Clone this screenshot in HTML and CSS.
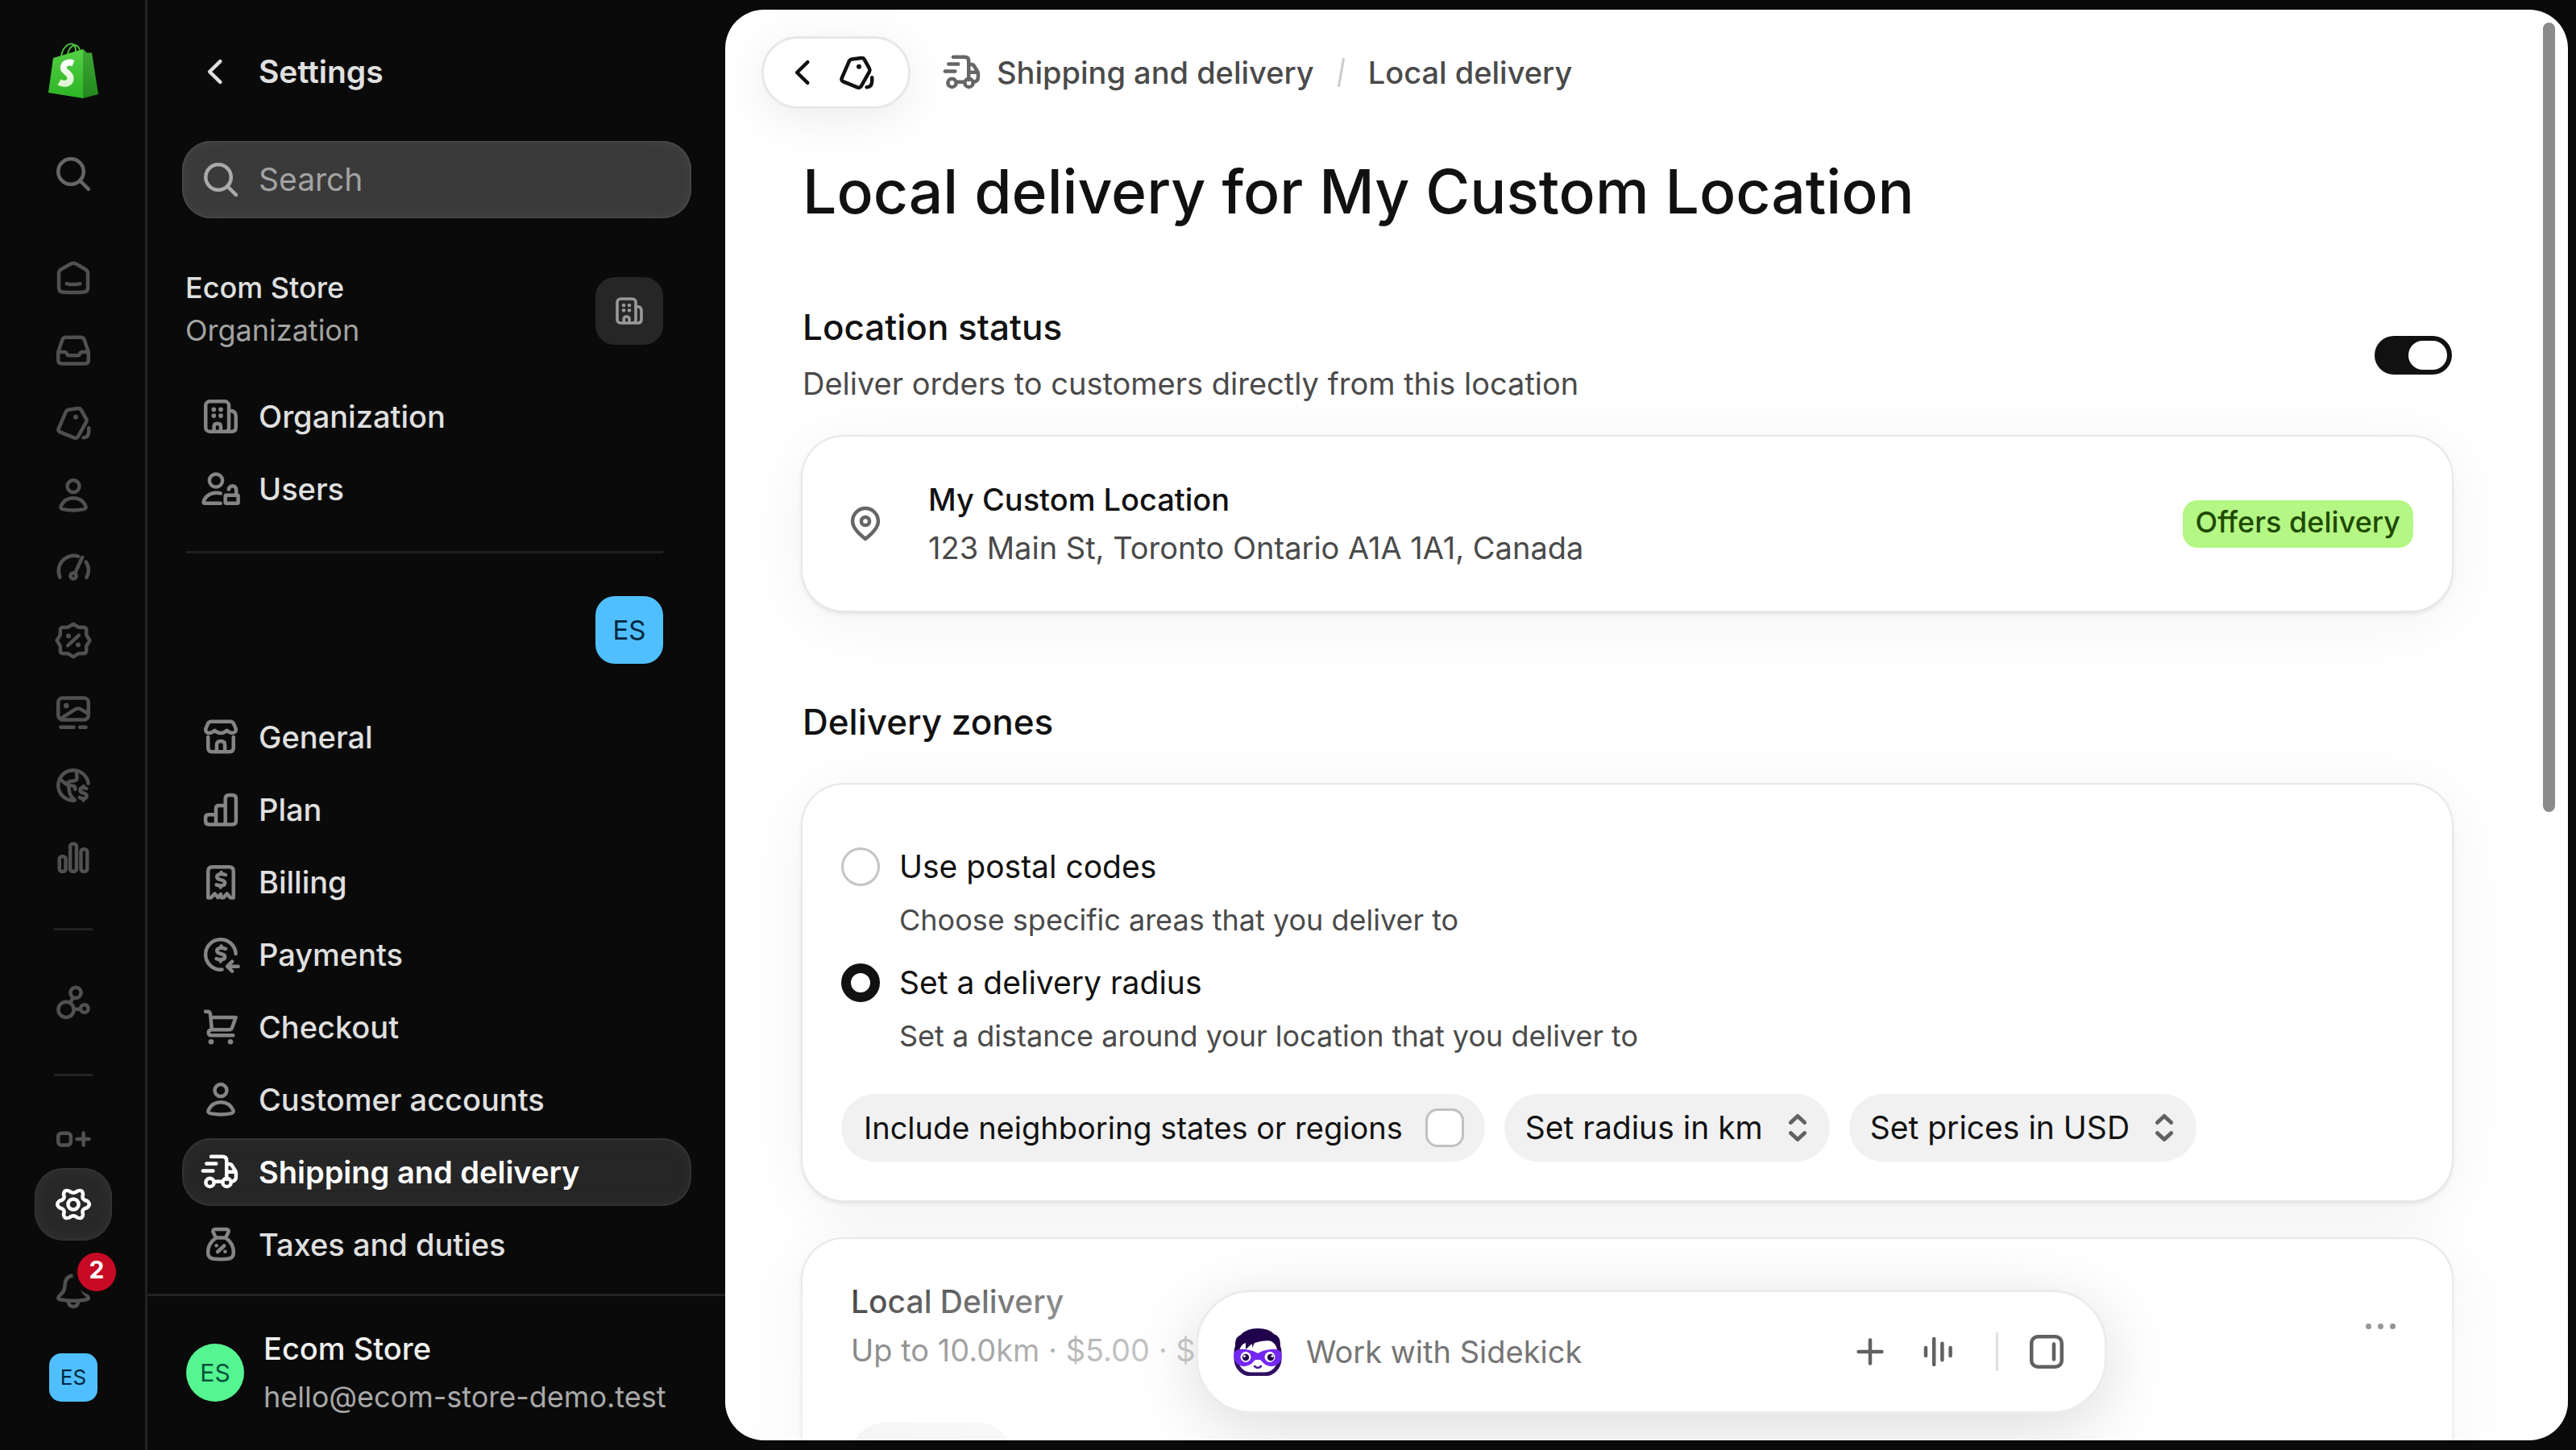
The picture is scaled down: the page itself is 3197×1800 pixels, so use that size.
FILE: index.html
```html
<!DOCTYPE html>
<html lang="en">
<head>
<meta charset="utf-8">
<meta name="viewport" content="width=device-width, initial-scale=1">
<title>Local delivery · Settings</title>
<link rel="stylesheet" href="styles.css">
</head>
<body>
<svg class="sprite" aria-hidden="true">
  <symbol id="i-search" viewBox="0 0 20 20"><circle cx="9" cy="9" r="5.25"/><path d="M13 13l3.3 3.3"/></symbol>
  <symbol id="i-home" viewBox="0 0 20 20"><path d="M8.9 4.2q1.1-.6 2.2 0L15 6.4q1 .6 1 1.800V14.200q0 1.500-1.500 1.600-4.500.4-9 0-1.500-.1-1.500-1.600V8.200q0-1.200 1-1.800z"/><path d="M7.250 12.400q2.750.6 5.500 0"/></symbol>
  <symbol id="i-inbox" viewBox="0 0 20 20"><path d="M3.750 10.700 5.400 5.700q.35-1.100 1.500-1.100h6.200q1.150 0 1.500 1.100l1.650 5v3.300q0 1.500-1.500 1.500H5.250q-1.500 0-1.500-1.500z"/><path d="M3.750 10.700h2.600q.7 0 .95.700t.95.700h3.500q.7 0 .95-.7t.95-.7h2.600"/></symbol>
  <symbol id="i-tag" viewBox="0 0 20 20"><path d="M7 5.200q.4-.6 1.100-.7l3.900-.5q.9-.1 1.300.7l2 3.600q.4.700 0 1.400l-3.400 6q-.5.800-1.400.5l-5.900-2.400q-1.200-.6-.6-1.700z"/><circle class="dot" cx="11" cy="7.600" r="1"/><path d="M16.400 12.100v1.600q-.1 2.300-2.200 2.400"/></symbol>
  <symbol id="i-person" viewBox="0 0 20 20"><circle cx="10" cy="6.200" r="2.500"/><path d="M4.900 14.300q1.600-3.200 5.100-3.200t5.100 3.200q.4 1.100-.8 1.400-4.300.9-8.600 0-1.200-.3-.8-1.400z"/></symbol>
  <symbol id="i-gauge" viewBox="0 0 20 20"><path d="M4.500 13.900a6.300 6.300 0 0 1 7.500-8.700M15.200 7.500a6.300 6.300 0 0 1 .3 6.400M10.700 12.200l3-6.600"/><circle cx="10" cy="13.300" r="1.200"/></symbol>
  <symbol id="i-discount" viewBox="0 0 20 20"><path d="M10 3.200l2.300 1.400h1.900q1.200 0 1.200 1.200v1.900L16.800 10l-1.400 2.300v1.900q0 1.200-1.200 1.200h-1.900L10 16.800l-2.300-1.400H5.800q-1.200 0-1.200-1.200v-1.900L3.200 10l1.400-2.300V5.800q0-1.200 1.200-1.200h1.900z"/><path d="M7.700 12.100l4.600-4.200"/><circle class="dot" cx="8" cy="8.200" r="1"/><circle class="dot" cx="12" cy="11.800" r="1"/></symbol>
  <symbol id="i-image" viewBox="0 0 20 20"><rect x="3.750" y="3.800" width="12.500" height="9" rx="1.800"/><path d="M5 12.200l5.600-3.600q1.400-.9 2.800 0l2.600 1.600M4.800 15.900h5.400M12.700 15.900h2.500"/><circle class="dot" cx="7.100" cy="7" r="1.100"/></symbol>
  <symbol id="i-globe" viewBox="0 0 20 20"><path d="M16.200 9.200a6.250 6.250 0 1 0-5.700 7"/><path d="M4.500 7.400l2.700 2.200c.9-2.600 4.500-.3 4.300-3L11.300 4M7.200 9.700l2.900.6c.6.200.9.700.6 1.300M8.100 10c.1 3 .5 4.600 2.500 6"/><path d="M15.400 11.300c-1.300-.8-2.700-.3-2.600.8.100 1.300 2.700.8 2.700 2.200 0 1.200-1.500 1.500-2.900.7M14.200 10.300v.7M14.200 15.400v.8"/></symbol>
  <symbol id="i-bars" viewBox="0 0 20 20"><rect x="4.250" y="9.400" width="2.600" height="6.200" rx="1"/><rect x="8.700" y="4.200" width="2.600" height="11.400" rx="1"/><rect x="13.150" y="6.400" width="2.600" height="9.200" rx="1"/></symbol>
  <symbol id="i-apps" viewBox="0 0 20 20"><circle cx="7" cy="13.100" r="3.200"/><circle cx="11" cy="6.100" r="2.200"/><circle cx="14.600" cy="12.700" r="1.600"/><path d="M10.200 12.900H13M8.700 10.300l1.200-2.200"/></symbol>
  <symbol id="i-addapp" viewBox="0 0 20 20"><rect x="3.750" y="7.600" width="5.200" height="4.900" rx="1.300"/><path d="M11.500 10h5M14.200 7.500v5"/></symbol>
  <symbol id="i-gear" viewBox="0 0 20 20"><circle cx="10" cy="10" r="2.200"/><path d="M15.700 8.600Q17.500 10 15.700 11.400 13.200 12 14 14 13.900 16.300 11.700 15.500 10 14 8.300 15.500 6.100 16.300 6 14 6.800 12 4.300 11.400 2.500 10 4.300 8.600 6.800 8 6 6 6.100 3.700 8.300 4.500 10 6 11.700 4.500 13.900 3.700 14 6 13.200 8 15.700 8.600z"/></symbol>
  <symbol id="i-bell" viewBox="0 0 20 20"><path d="M10 3.500c-2.500.1-3.400 1.900-3.500 4.100-.1 2.200-.9 3-2 4-1.200 1.200-.9 1.700.5 1.900 3.300.6 6.700.6 10 0 1.400-.2 1.700-.7.5-1.900-1.100-1-1.900-1.800-2-4-.1-2.200-1-4-3.500-4.100zM8 14.200q0 2.100 2 2.100t2-2.100"/></symbol>
  <symbol id="i-building" viewBox="0 0 20 20"><rect x="3.750" y="3.750" width="9.600" height="12.500" rx="1.700"/><path d="M13.400 7.700h.6q2.250 0 2.250 2.300v4.500q0 1.750-1.700 1.750h-2M7.200 16.100v-1.900q0-1.300 1.400-1.300t1.400 1.300v1.900"/><circle class="dot" cx="7.100" cy="7.100" r=".95"/><circle class="dot" cx="10" cy="7.100" r=".95"/><circle class="dot" cx="7.100" cy="9.700" r=".95"/><circle class="dot" cx="10" cy="9.700" r=".95"/></symbol>
  <symbol id="i-users" viewBox="0 0 20 20"><circle cx="8" cy="6.500" r="2.700"/><path d="M9.900 11.800c-3.400-.8-6.300.8-7 3.500q-.1.600.5.600h6.500"/><rect x="11.900" y="12.600" width="5.300" height="3.300" rx=".3"/><path d="M13.300 10.200c.2-2 3-2 3.100.1v2"/></symbol>
  <symbol id="i-store" viewBox="0 0 20 20"><path d="M6.100 3.600h7.800q1 0 1.400.8l.8 1.800c.5 1.200-.2 2.100-1.300 2.100-1 0-1.400-.3-2.300-1-.8.800-1.500 1-2.500 1s-1.700-.2-2.500-1c-.9.700-1.300 1-2.300 1-1.100 0-1.800-.9-1.300-2.100l.8-1.800q.4-.8 1.400-.8zM4.750 10v4.300q0 1.750 1.750 1.750h7q1.750 0 1.750-1.750V10M8.300 16v-2.600q0-1.700 1.700-1.700t1.700 1.700V16"/></symbol>
  <symbol id="i-plan" viewBox="0 0 20 20"><path d="M8 16.200V9.500q0-1.200 1.200-1.200h2.700M11.900 16.200V5.500q0-1.500 1.500-1.500h1.400q1.500 0 1.500 1.500v9.200q0 1.500-1.500 1.500H5.200q-1.500 0-1.500-1.500v-1.300q0-1.300 1.300-1.300h3"/></symbol>
  <symbol id="i-bill" viewBox="0 0 20 20"><path d="M4.750 16.500v-11q0-1.750 1.750-1.750h7q1.750 0 1.750 1.750v11l-1.300-.1-1.400-1.600-1.300 1.600h-1L10 15l-1.200 1.400-1.300-1.600-1.500 1.600z"/><path d="M12 7c-1.700-.6-3.600-.4-3.600.9 0 1.500 3.300.8 3.300 2.400 0 1.300-1.900 1.400-3.500.8M10.200 6v.7M9.900 11.400v.8"/></symbol>
  <symbol id="i-pay" viewBox="0 0 20 20"><path d="M16.200 9.700A6.250 6.250 0 1 0 10.500 16.200"/><path d="M12 7.600c-1.700-.6-3.600-.4-3.600.9 0 1.500 3.300.8 3.300 2.400 0 1.300-1.900 1.400-3.500.8M10.200 6.500v.7M9.900 12v.8M17.200 14.900H13M14.700 12.900l-2 2 2 2"/></symbol>
  <symbol id="i-cart" viewBox="0 0 20 20"><path d="M3.700 3.600h.8q1.100 0 1.200 1.200l.6 6.300h7.100q1 0 1.300-.9l1.500-4.200H6M6.300 11.200q-1.400 0-1.400 1.100t1.300 1.100h8.900"/><circle class="dot" cx="6" cy="16.100" r="1.100"/><circle class="dot" cx="14" cy="16.100" r="1.100"/></symbol>
  <symbol id="i-truck" viewBox="0 0 20 20"><path d="M6 3.600h4.700q1.700 0 1.700 1.700V13M4.100 6.500h4M2.600 9.500h4.200M7.300 13.900h3.400M12.500 6.700h.9q.9 0 1.300.7l1.200 1.900q.4.500.4 1.200V12q0 1.500-1.600 1.900M12.800 9.900h3"/><circle cx="5.500" cy="14.300" r="1.700"/><circle cx="12.500" cy="14.300" r="1.700"/></symbol>
  <symbol id="i-tax" viewBox="0 0 20 20"><path d="M8 7.200 7 5.200q-.7-1.500.8-1.500h4.400q1.500 0 .8 1.500l-1 2zM8 7.200h4q3.300 2.300 3.300 6.100 0 2.400-2.600 2.600-2.700.3-5.400 0-2.600-.2-2.600-2.600 0-3.800 3.300-6.100z"/><path d="M8.700 13l2.700-2.500"/><circle class="dot" cx="8.200" cy="10.400" r=".75"/><circle class="dot" cx="11.800" cy="12.900" r=".75"/></symbol>
  <symbol id="i-chev" viewBox="0 0 20 20"><path d="M12.100 5.700 7.700 10l4.400 4.300"/></symbol>
  <symbol id="i-pin" viewBox="0 0 20 20"><path d="M10 16.300q-5.300-4-5.300-7.300a5.300 5.300 0 0 1 10.600 0q0 3.300-5.300 7.300z"/><circle cx="10" cy="9" r="1.700"/></symbol>
  <symbol id="i-updown" viewBox="0 0 20 20"><path d="M6.800 7.600 10 4.600l3.200 3M6.800 12.400l3.200 3 3.200-3"/></symbol>
  <symbol id="i-plus" viewBox="0 0 20 20"><path d="M10 5.200v9.600M5.200 10h9.600"/></symbol>
  <symbol id="i-wave" viewBox="0 0 20 20"><path d="M5 8.300v3.400M8.400 4.700v10.600M11.800 6.600v6.800M15.200 8.300v3.400"/></symbol>
  <symbol id="i-panel" viewBox="0 0 20 20"><rect x="3.750" y="3.750" width="12.500" height="12.500" rx="2.600"/><path d="M13 6.800v6.400"/></symbol>
</svg>

<div class="app">
  <nav class="rail" aria-label="Main">
    <a class="logo" href="#" aria-label="Home">
      <svg viewBox="0 0 62 70" width="62" height="70">
        <defs>
          <linearGradient id="bag" x1="0" y1="0" x2="0" y2="1"><stop offset="0" stop-color="#54cf43"/><stop offset="1" stop-color="#2cb526"/></linearGradient>
          <linearGradient id="side" x1="0" y1="0" x2="0" y2="1"><stop offset="0" stop-color="#3ea634"/><stop offset="1" stop-color="#23891f"/></linearGradient>
          <linearGradient id="ess" x1="0" y1="0" x2="0" y2="1"><stop offset="0" stop-color="#fff"/><stop offset="1" stop-color="#dff5d4"/></linearGradient>
        </defs>
        <path d="M16 16C18 6 24 1 29 1.500s5 6 5 10M24 14c1-7 6-11 9-11s5 3 6 6" fill="none" stroke="#4cc63d" stroke-width="1.800"/>
        <path d="M6 19 43 8v61L0 62z" fill="url(#bag)"/>
        <path d="M43 8l5 4.500h6L62 64l-19 5z" fill="url(#side)"/>
        <path d="M31 25.500C23 22.500 16.500 28 19.500 33.500c1.500 3 7.500 5 8 10 .5 6.500-6.500 9.500-14 5.500" fill="none" stroke="url(#ess)" stroke-width="8"/>
      </svg>
    </a>
    <button class="rail-item rail-search" aria-label="Search"><svg class="icon"><use href="#i-search"/></svg></button>
    <div class="rail-group">
      <a class="rail-item" href="#" aria-label="Home"><svg class="icon"><use href="#i-home"/></svg></a>
      <a class="rail-item" href="#" aria-label="Orders"><svg class="icon"><use href="#i-inbox"/></svg></a>
      <a class="rail-item" href="#" aria-label="Products"><svg class="icon"><use href="#i-tag"/></svg></a>
      <a class="rail-item" href="#" aria-label="Customers"><svg class="icon"><use href="#i-person"/></svg></a>
      <a class="rail-item" href="#" aria-label="Marketing"><svg class="icon"><use href="#i-gauge"/></svg></a>
      <a class="rail-item" href="#" aria-label="Discounts"><svg class="icon"><use href="#i-discount"/></svg></a>
      <a class="rail-item" href="#" aria-label="Content"><svg class="icon"><use href="#i-image"/></svg></a>
      <a class="rail-item" href="#" aria-label="Markets"><svg class="icon"><use href="#i-globe"/></svg></a>
      <a class="rail-item" href="#" aria-label="Analytics"><svg class="icon"><use href="#i-bars"/></svg></a>
    </div>
    <div class="rail-group rail-apps">
      <a class="rail-item" href="#" aria-label="Apps"><svg class="icon"><use href="#i-apps"/></svg></a>
    </div>
    <div class="rail-foot">
      <a class="rail-item" href="#" aria-label="Add app"><svg class="icon"><use href="#i-addapp"/></svg></a>
      <a class="rail-item rail-active" href="#" aria-label="Settings"><svg class="icon"><use href="#i-gear"/></svg></a>
      <button class="rail-item rail-bell" aria-label="Notifications"><svg class="icon"><use href="#i-bell"/></svg><span class="count">2</span></button>
      <button class="avatar avatar-small">ES</button>
    </div>
  </nav>

  <aside class="sidebar">
    <a class="side-title" href="#"><svg class="icon"><use href="#i-chev"/></svg>Settings</a>
    <label class="search"><svg class="icon"><use href="#i-search"/></svg><input type="search" placeholder="Search" aria-label="Search settings"></label>
    <div class="side-scroll">
      <div class="org">
        <div class="org-text"><strong>Ecom Store</strong><span>Organization</span></div>
        <button class="org-button" aria-label="Organization"><svg class="icon"><use href="#i-building"/></svg></button>
      </div>
      <ul class="menu">
        <li><a href="#"><svg class="icon"><use href="#i-building"/></svg>Organization</a></li>
        <li><a href="#"><svg class="icon"><use href="#i-users"/></svg>Users</a></li>
      </ul>
      <div class="store"><button class="avatar">ES</button></div>
      <ul class="menu">
        <li><a href="#"><svg class="icon"><use href="#i-store"/></svg>General</a></li>
        <li><a href="#"><svg class="icon"><use href="#i-plan"/></svg>Plan</a></li>
        <li><a href="#"><svg class="icon"><use href="#i-bill"/></svg>Billing</a></li>
        <li><a href="#"><svg class="icon"><use href="#i-pay"/></svg>Payments</a></li>
        <li><a href="#"><svg class="icon"><use href="#i-cart"/></svg>Checkout</a></li>
        <li><a href="#"><svg class="icon"><use href="#i-person"/></svg>Customer accounts</a></li>
        <li><a class="current" href="#" aria-current="page"><svg class="icon"><use href="#i-truck"/></svg>Shipping and delivery</a></li>
        <li><a href="#"><svg class="icon"><use href="#i-tax"/></svg>Taxes and duties</a></li>
      </ul>
    </div>
    <div class="account">
      <span class="face">ES</span>
      <div class="account-text"><strong>Ecom Store</strong><span>hello@ecom-store-demo.test</span></div>
    </div>
  </aside>

  <main class="panel">
    <div class="scrollbar"></div>
    <header class="topbar">
      <button class="back" aria-label="Back"><svg class="icon"><use href="#i-chev"/></svg><svg class="icon"><use href="#i-tag"/></svg></button>
      <nav class="crumbs" aria-label="Breadcrumb">
        <svg class="icon"><use href="#i-truck"/></svg>
        <a href="#">Shipping and delivery</a>
        <span class="slash"></span>
        <span>Local delivery</span>
      </nav>
    </header>

    <div class="content">
      <h1>Local delivery for My Custom Location</h1>

      <section>
        <div class="section-head">
          <div>
            <h2 id="status">Location status</h2>
            <p class="muted">Deliver orders to customers directly from this location</p>
          </div>
          <input class="switch" type="checkbox" role="switch" aria-labelledby="status" checked>
        </div>
        <div class="card location">
          <svg class="icon"><use href="#i-pin"/></svg>
          <div class="location-text">
            <h3>My Custom Location</h3>
            <p class="muted">123 Main St, Toronto Ontario A1A 1A1, Canada</p>
          </div>
          <span class="badge">Offers delivery</span>
        </div>
      </section>

      <section class="zones">
        <h2>Delivery zones</h2>
        <div class="card zone-type">
          <div class="option">
            <input type="radio" name="zone" id="postal">
            <label for="postal">Use postal codes</label>
            <p>Choose specific areas that you deliver to</p>
          </div>
          <div class="option">
            <input type="radio" name="zone" id="radius" checked>
            <label for="radius">Set a delivery radius</label>
            <p>Set a distance around your location that you deliver to</p>
          </div>
          <div class="pills">
            <label class="pill">Include neighboring states or regions<input type="checkbox"></label>
            <div class="pill-select"><select aria-label="Distance unit"><option>Set radius in km</option></select><svg class="icon"><use href="#i-updown"/></svg></div>
            <div class="pill-select"><select aria-label="Currency"><option>Set prices in USD</option></select><svg class="icon"><use href="#i-updown"/></svg></div>
          </div>
        </div>
        <div class="card zone">
          <div class="zone-text">
            <h3>Local Delivery</h3>
            <p class="muted">Up to 10.0km · $5.00 · $0.00 minimum order</p>
            <div class="zone-chip"></div>
          </div>
          <button class="more" aria-label="More actions"><i></i><i></i><i></i></button>
        </div>
      </section>
    </div>

    <div class="dock">
      <div class="sidekick">
        <svg class="kick" viewBox="0 0 60 60">
          <rect x="3" y="12" width="54" height="46" rx="19" fill="#fff" stroke="#2f105f" stroke-width="5"/>
          <path d="M2 33V19Q3 11 9 9 16 1 30 1 44 1 50 8 58 10 58 22V33L54 32Q55 22 49 17 38 15 26 19L23 25V20L15 27V19Q8 21 6 32z" fill="#20024c"/>
          <path d="M1 31Q4 26 14 27 24 28 30 32 36 28 46 27 56 26 59 31 62 40 54 46 45 51 38 45L33 40H27L22 45Q14 51 6 46-2 40 1 31z" fill="#7428f4"/>
          <circle cx="15" cy="36.500" r="6.500" fill="#fff"/><circle cx="45" cy="36.500" r="6.500" fill="#fff"/>
          <circle cx="15" cy="37" r="4.200" fill="#20024c"/><circle cx="46" cy="37" r="4.200" fill="#20024c"/>
          <circle cx="13.500" cy="35.500" r="1.500" fill="#fff"/><circle cx="48" cy="35.500" r="1.500" fill="#fff"/>
          <path d="M26 48q4 4 8 0" fill="none" stroke="#4a1d94" stroke-width="2.500" stroke-linecap="round"/>
        </svg>
        <input type="text" placeholder="Work with Sidekick" aria-label="Work with Sidekick">
        <button aria-label="Add"><svg class="icon"><use href="#i-plus"/></svg></button>
        <button aria-label="Voice"><svg class="icon"><use href="#i-wave"/></svg></button>
        <span class="bar"></span>
        <button aria-label="Open panel"><svg class="icon"><use href="#i-panel"/></svg></button>
      </div>
    </div>
  </main>
</div>
</body>
</html>
```
FILE: styles.css
```css
* { box-sizing: border-box; }

body {
  margin: 0;
  background: #0a0a0a;
  color: #111;
  font-family: Inter, "Liberation Sans", sans-serif;
  font-size: 38px;
  line-height: 60px;
}

h1, h2, h3, p, ul { margin: 0; padding: 0; }
ul { list-style: none; }
a { color: inherit; text-decoration: none; }
button, input, select { margin: 0; font: inherit; color: inherit; }
button { padding: 0; border: 0; background: none; }
h3, label { font-size: 38px; font-weight: 500; }
h2 { font-size: 44px; font-weight: 500; }

.sprite { position: absolute; width: 0; height: 0; }

.icon {
  flex: none;
  display: block;
  width: 60px;
  height: 60px;
  fill: none;
  stroke: currentColor;
  stroke-width: 1.5;
  stroke-linecap: round;
  stroke-linejoin: round;
}
.dot { fill: currentColor; stroke: none; }

.app { display: flex; height: 100vh; overflow: hidden; }

/* Icon rail */
.rail {
  flex: none;
  display: flex;
  flex-direction: column;
  align-items: center;
  width: 183px;
  padding: 53px 0 60px 2px;
  border-right: 3px solid #222;
  color: #505050;
}
.logo { height: 70px; }
.logo svg { display: block; }
.rail-item { display: block; }
.rail-search { margin: 63px 0 69px; color: #666; }
.rail-group { display: flex; flex-direction: column; gap: 30px; }
.rail-apps { gap: 59px; margin-top: 57px; }
.rail-apps::before, .rail-apps::after {
  content: "";
  width: 48px;
  height: 3px;
  margin: 0 6px;
  background: #222;
}
.rail-foot {
  display: flex;
  flex-direction: column;
  align-items: center;
  margin-top: auto;
}
.rail-active {
  display: flex;
  align-items: center;
  justify-content: center;
  width: 96px;
  height: 90px;
  margin: 6px 0 33px;
  border-radius: 36px;
  background: #282828;
  box-shadow: inset 0 0 18px #333, inset 0 0 0 1px #3a3a3a;
  color: #fff;
}
.rail-bell { position: relative; margin-bottom: 47px; }
.count {
  position: absolute;
  top: -18px;
  left: 35px;
  width: 48px;
  height: 48px;
  border-radius: 50%;
  background: #c70a24;
  box-shadow: 0 0 0 6px #0a0a0a;
  color: #fff;
  font-size: 30px;
  font-weight: 700;
  line-height: 42px;
}
.avatar {
  width: 84px;
  height: 84px;
  border-radius: 24px;
  background: #50bfff;
  color: #00263d;
  font-size: 33px;
}
.avatar-small {
  width: 60px;
  height: 60px;
  border-radius: 15px;
  font-size: 26px;
}

/* Settings sidebar */
.sidebar {
  flex: none;
  display: flex;
  flex-direction: column;
  width: 717px;
  color: #e0e0e0;
}
.side-title {
  display: flex;
  align-items: center;
  gap: 24px;
  padding: 59px 54px 56px;
  font-size: 39px;
  font-weight: 600;
}
.search {
  display: flex;
  align-items: center;
  gap: 17px;
  height: 96px;
  margin: 0 42px 30px 43px;
  padding: 0 18px;
  border-radius: 36px;
  background: #3a3a3a;
  box-shadow: inset 0 0 18px #424242, inset 0 0 0 2px #4a4a4a;
  color: #aaa;
}
.search input {
  flex: 1;
  min-width: 0;
  padding: 0;
  border: 0;
  outline: 0;
  background: none;
  font-size: 39px;
  font-weight: 400;
}
.search input::placeholder { color: #a3a3a3; opacity: 1; }
.side-scroll { flex: 1; min-height: 0; overflow: hidden; }
.org {
  display: flex;
  align-items: center;
  justify-content: space-between;
  padding: 30px 77px 34px 47px;
  font-size: 36px;
  line-height: 53px;
}
.org-text, .account-text { display: flex; flex-direction: column; }
.org-text { padding-bottom: 4px; }
.org-text strong { font-weight: 500; }
.org-text span { color: #a3a3a3; }
.org-button {
  display: flex;
  align-items: center;
  justify-content: center;
  width: 84px;
  height: 84px;
  border-radius: 24px;
  background: #262626;
  color: #999;
}
.org-button .icon { width: 48px; height: 48px; }
.menu {
  display: flex;
  flex-direction: column;
  gap: 6px;
  padding: 0 42px 0 43px;
  font-weight: 500;
}
.menu a {
  display: flex;
  align-items: center;
  gap: 17px;
  height: 84px;
  padding: 0 18px;
  border-radius: 36px;
}
.menu .icon { color: #858585; }
.menu .current {
  background: #262626;
  box-shadow: inset 0 0 18px #2e2e2e, inset 0 0 0 2px #363636;
  color: #fff;
  font-weight: 600;
}
.menu .current .icon { color: #fff; }
.store {
  display: flex;
  justify-content: flex-end;
  margin: 35px 77px 49px 48px;
  padding-top: 53px;
  border-top: 3px solid #1f1f1f;
}
.account {
  display: flex;
  align-items: center;
  gap: 24px;
  padding: 35px 48px 36px;
  border-top: 3px solid #222;
}
.account strong { color: #f0f0f0; font-weight: 500; }
.account-text { white-space: nowrap; }
.account-text span { color: #a8a8a8; font-size: 36px; }
.face {
  flex: none;
  width: 72px;
  height: 72px;
  border-radius: 50%;
  background: #55f591;
  color: #00523a;
  font-size: 30px;
  line-height: 72px;
  text-align: center;
}

/* Page */
.panel {
  position: relative;
  flex: 1;
  min-width: 0;
  margin: 12px 10px 12px 0;
  overflow: hidden;
  border-radius: 48px;
  background: #fff;
}
.scrollbar {
  position: absolute;
  top: 16px;
  right: 16px;
  width: 15px;
  height: 980px;
  border-radius: 8px;
  background: #8b8b8b;
}
.topbar {
  display: flex;
  align-items: center;
  gap: 35px;
  padding: 33px 45px 0;
}
.back {
  display: flex;
  align-items: center;
  gap: 7px;
  height: 90px;
  padding: 0 34px 0 18px;
  border: 3px solid #e8e8e8;
  border-radius: 45px;
  background: #fff;
  box-shadow: 0 12px 60px rgba(0, 0, 0, .08);
}
.crumbs {
  display: flex;
  align-items: center;
  gap: 12px;
  color: #4a4a4a;
  font-weight: 500;
}
.crumbs .icon { color: #666; }
.slash {
  width: 3px;
  height: 36px;
  margin: 0 20px;
  background: #ccc;
  transform: rotate(10deg);
}
.content { padding: 55px 144px 0 96px; }
h1 { font-size: 75px; font-weight: 500; line-height: 96px; }
.content section { margin-top: 90px; }
.muted { color: #4a4a4a; }
.section-head {
  display: flex;
  align-items: center;
  justify-content: space-between;
  margin-bottom: 36px;
}
.section-head .muted { margin-top: 10px; }
.switch {
  appearance: none;
  display: flex;
  align-items: center;
  justify-content: flex-end;
  width: 96px;
  height: 48px;
  padding: 0 6px;
  border-radius: 24px;
  background: #111;
}
.switch::before {
  content: "";
  width: 48px;
  height: 36px;
  border-radius: 18px;
  background: #fff;
}
.card {
  border-radius: 51px;
  background: #fff;
  box-shadow: 0 0 0 2px #e8e8e8, 0 3px 6px rgba(0, 0, 0, .12), 0 12px 84px rgba(0, 0, 0, .06);
}
.location {
  display: flex;
  align-items: center;
  gap: 48px;
  padding: 48px;
}
.location .icon { color: #666; }
.location-text { flex: 1; }
.badge {
  padding: 0 16px 4px;
  border-radius: 18px;
  background: #b4f784;
  color: #1f4a00;
  font-size: 36px;
  font-weight: 500;
  line-height: 55px;
}
.content .zones { display: flex; flex-direction: column; gap: 48px; margin-top: 108px; }
.zone-type { padding: 69px 48px 48px; }
.option {
  display: grid;
  grid-template-columns: 48px 1fr;
  column-gap: 24px;
  align-items: center;
  margin-bottom: 12px;
  line-height: 66px;
}
.option label, .pill, .pill-select { font-weight: 400; }
.option label { font-size: 39px; }
.option p { grid-column: 2; color: #4a4a4a; font-size: 36px; }
.option input {
  appearance: none;
  width: 48px;
  height: 48px;
  border: 3px solid #c4c4c4;
  border-radius: 50%;
  background: #fff;
}
.option input:checked { border: 12px solid #111; }
.pills { display: flex; gap: 24px; margin-top: 39px; }
.pill {
  display: flex;
  align-items: center;
  gap: 28px;
  height: 84px;
  padding: 0 26px 0 28px;
  border-radius: 42px;
  background: #f1f1f1;
}
.pill input {
  appearance: none;
  width: 48px;
  height: 48px;
  border: 3px solid #c0c0c0;
  border-radius: 15px;
  background: #fff;
}
.pill-select { position: relative; font-size: 39px; }
.pill-select select {
  appearance: none;
  height: 84px;
  padding: 0 82px 0 26px;
  border: 0;
  border-radius: 42px;
  background: #f1f1f1;
}
.pill-select .icon {
  position: absolute;
  top: 15px;
  right: 13px;
  width: 54px;
  height: 54px;
  stroke-width: 1.8;
  color: #616161;
  pointer-events: none;
}
.zone {
  display: flex;
  justify-content: space-between;
  padding: 48px 60px;
}
.zone h3 { font-size: 39px; }
.zone-chip {
  width: 200px;
  height: 84px;
  margin-top: 60px;
  border-radius: 42px;
  background: #eee;
}
.more { display: flex; gap: 8px; align-self: flex-start; padding: 57px 10px; }
.more i { width: 7px; height: 7px; border-radius: 50%; background: #555; }

/* Floating assistant bar */
.dock {
  position: absolute;
  right: 0;
  bottom: 0;
  left: 0;
  display: flex;
  justify-content: center;
  padding: 90px 0 33px 12px;
}
/* Fades the page out behind the bar */
.dock::before {
  content: "";
  position: absolute;
  inset: 0;
  background: radial-gradient(ellipse 50% 130% at 50% 100%, rgba(255, 255, 255, .7) 60%, rgba(255, 255, 255, .5) 80%, rgba(255, 255, 255, .25) 98%, rgba(255, 255, 255, 0) 115%);
  mask-image: linear-gradient(transparent 10%, #000 35%);
}
.sidekick {
  position: relative;
  display: flex;
  align-items: center;
  width: 1131px;
  height: 154px;
  padding: 0 42px 0 44px;
  border: 3px solid #ececec;
  border-radius: 69px;
  background: #fff;
  box-shadow: 0 18px 84px rgba(0, 0, 0, .14);
  color: #616161;
}
.kick { width: 60px; height: 60px; margin-right: 30px; }
.sidekick input {
  flex: 1;
  min-width: 0;
  padding: 0;
  border: 0;
  outline: 0;
  background: none;
}
.sidekick input::placeholder { color: #757575; opacity: 1; }
.sidekick button { margin-left: 24px; }
.bar { width: 3px; height: 48px; margin-left: 42px; background: #e0e0e0; }
.sidekick .bar + button { margin-left: 30px; }
```
